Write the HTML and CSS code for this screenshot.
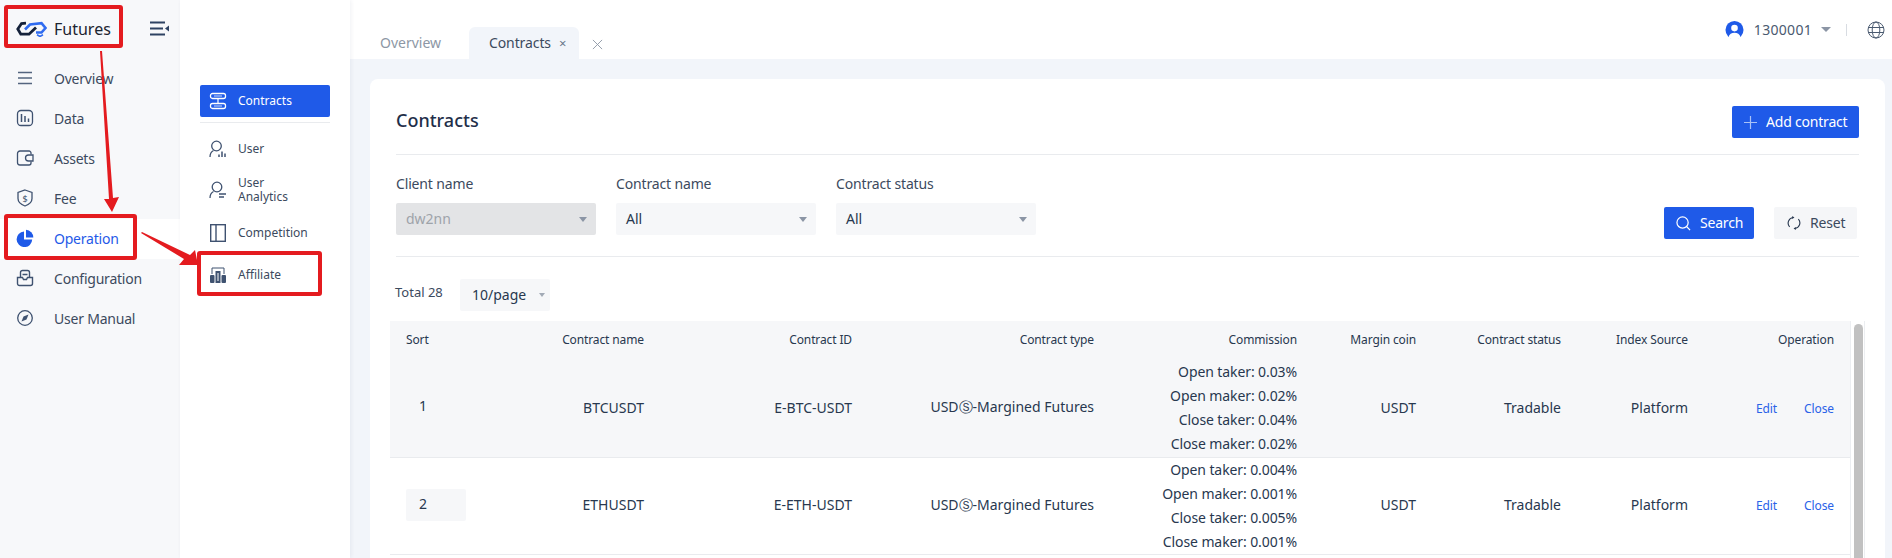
FILE: index.html
```html
<!DOCTYPE html>
<html lang="en">
<head>
<meta charset="utf-8">
<title>Futures - Contracts</title>
<link rel="stylesheet" href="styles.css">
</head>
<body>
<div class="app">
  <aside class="side">
    <div class="brand">
      <svg class="logo" viewBox="0 0 31 16" width="31" height="16"><path d="M10 2.200L5.500 2.500 1.800 8 4.800 13.200H13L20 6.500" fill="none" stroke="#14213a" stroke-width="2.800"/><path d="M9 8.500L14 3.500 25.500 2.200 29.500 7 25.500 11.500H20" fill="none" stroke="#2f6bf0" stroke-width="2.600"/><path d="M21 13.800l3 1.700 3-1.700" fill="none" stroke="#2f6bf0" stroke-width="1.600"/></svg>
      <span class="brand-name">Futures</span>
      <svg class="fold" viewBox="0 0 19 15" width="19" height="15"><path d="M0 1.500h15M0 7.500h13M0 13.500h15" stroke="#2e4262" stroke-width="2" fill="none"/><path d="M19 4.500v6l-4-3z" fill="#2e4262"/></svg>
    </div>
    <nav>
      <a class="nav-item"><svg viewBox="0 0 18 18" width="18" height="18"><path d="M2 3.500h14M2 9h14M2 14.500h14" stroke="#54657f" stroke-width="1.500" fill="none"/></svg>Overview</a>
      <a class="nav-item"><svg viewBox="0 0 18 18" width="18" height="18"><rect x="1.500" y="1.500" width="15" height="15" rx="3.500" fill="none" stroke="#3f5270" stroke-width="1.300"/><path d="M5.500 5v8M9 7v6M12.500 9.500v3.500" stroke="#3f5270" stroke-width="1.500"/></svg>Data</a>
      <a class="nav-item"><svg viewBox="0 0 18 18" width="18" height="18"><path d="M15 5.500V4a2 2 0 0 0-2-2H4a2.500 2.500 0 0 0-2.500 2.500v9A2.500 2.500 0 0 0 4 16h9a2 2 0 0 0 2-2v-1.500" fill="none" stroke="#3f5270" stroke-width="1.300"/><path d="M17 6h-4.500a3 3 0 0 0 0 6H17z" fill="#f7f8fa" stroke="#3f5270" stroke-width="1.300"/></svg>Assets</a>
      <a class="nav-item"><svg viewBox="0 0 18 18" width="18" height="18"><path d="M9 1l7 2.500v6c0 3.500-3 6-7 7.500-4-1.500-7-4-7-7.500v-6z" fill="none" stroke="#3f5270" stroke-width="1.300"/><text class="fee-sign" x="9" y="12.500">$</text></svg>Fee</a>
      <a class="nav-item active"><svg viewBox="0 0 18 18" width="18" height="18"><path d="M8 2.500A7.800 7.800 0 1 0 16.200 10.500H8z" fill="#1f5ae8"/><path d="M10 .8a7.500 7.500 0 0 1 7.300 7.700H10z" fill="#1f5ae8"/></svg>Operation</a>
      <a class="nav-item"><svg viewBox="0 0 18 18" width="18" height="18"><path d="M4.500 8V3.500a2 2 0 0 1 2-2h5a2 2 0 0 1 2 2V8M6.500 5.500h5" fill="none" stroke="#3f5270" stroke-width="1.400"/><path d="M1.500 8.500h5l1 2h3l1-2h5v6a2 2 0 0 1-2 2h-11a2 2 0 0 1-2-2z" fill="none" stroke="#3f5270" stroke-width="1.400"/></svg>Configuration</a>
      <a class="nav-item"><svg viewBox="0 0 18 18" width="18" height="18"><circle cx="9" cy="9" r="7.300" fill="none" stroke="#3f5270" stroke-width="1.300"/><path d="M12.500 5.500L10.500 10.500 5.500 12.500 7.500 7.500z" fill="#3f5270"/></svg>User Manual</a>
    </nav>
  </aside>

  <aside class="sub">
    <a class="sub-item current"><svg viewBox="0 0 18 18" width="18" height="18"><rect x="1.500" y="1.500" width="15" height="5" rx="2" fill="none" stroke="#fff" stroke-width="1.300"/><rect x="1.500" y="11.500" width="15" height="5" rx="2" fill="none" stroke="#fff" stroke-width="1.300"/><path d="M5 4h8M5 14h8" stroke="#cdddfb" stroke-width="1.200"/><path d="M9 6.500v5" stroke="#fff" stroke-width="1.200"/></svg>Contracts</a>
    <div class="sub-rule"></div>
    <a class="sub-item"><svg viewBox="0 0 18 18" width="18" height="18"><circle cx="7.500" cy="6" r="4.800" fill="none" stroke="#3f5270" stroke-width="1.300"/><path d="M1 17c0-3.500 1.500-5.500 3.500-6.500" fill="none" stroke="#3f5270" stroke-width="1.300"/><path d="M10 17v-2.500M13 17v-5.500M16 17v-3.500" fill="none" stroke="#3f5270" stroke-width="1.500"/></svg>User</a>
    <a class="sub-item double"><svg viewBox="0 0 18 18" width="18" height="18"><circle cx="8" cy="6" r="4.800" fill="none" stroke="#3f5270" stroke-width="1.300"/><path d="M1 17c0-3.500 1.500-5.500 3.500-6.500M10 13h7M10 16h5" fill="none" stroke="#3f5270" stroke-width="1.300"/></svg><span>User<br>Analytics</span></a>
    <a class="sub-item comp"><svg viewBox="0 0 18 18" width="18" height="18"><rect x="1.700" y=".7" width="14.600" height="16.600" fill="none" stroke="#3f5270" stroke-width="1.400"/><path d="M7 .7v16.600" stroke="#3f5270" stroke-width="1.400"/></svg>Competition</a>
    <a class="sub-item aff"><svg viewBox="0 0 18 18" width="18" height="18"><path d="M3 8V2h12v6" fill="none" stroke="#3f5270" stroke-width="1"/><rect x="1" y="9" width="4.500" height="8" rx="1" fill="#3f5270"/><rect x="6.500" y="5" width="5" height="12" fill="#3f5270"/><rect x="12.500" y="9" width="4.500" height="8" rx="1" fill="#3f5270"/><path d="M9 7v8" stroke="#fff" stroke-width="1"/></svg>Affiliate</a>
  </aside>

  <main class="main">
    <header class="top">
      <div class="tabs">
        <span class="tab muted">Overview</span>
        <span class="tab selected">Contracts<span class="tab-x">×</span></span>
        <svg class="tabs-close" viewBox="0 0 12 12" width="11" height="11"><path d="M1 1l10 10M11 1L1 11" stroke="#8d97a5" stroke-width="1" fill="none"/></svg>
      </div>
      <div class="account">
        <svg viewBox="0 0 20 20" width="19" height="20"><circle cx="10" cy="10" r="9.500" fill="#1f5ae8"/><circle cx="10" cy="8" r="3.500" fill="#fff"/><path d="M3.500 17.500c1-3 3.500-4.500 6.500-4.500s5.500 1.500 6.500 4.500c-2 1.500-4 2.500-6.500 2.500s-4.500-1-6.500-2.500z" fill="#fff"/></svg>
        <span class="acct-id">1300001</span>
        <span class="caret big"></span>
        <span class="acct-rule"></span>
        <svg viewBox="0 0 18 18" width="18" height="18"><circle cx="9" cy="9" r="8" fill="none" stroke="#4a5a70" stroke-width="1"/><ellipse cx="9" cy="9" rx="3.800" ry="8" fill="none" stroke="#4a5a70" stroke-width="1"/><path d="M1.500 6.500h15M1.500 11.500h15" stroke="#4a5a70" stroke-width="1"/></svg>
      </div>
    </header>

    <div class="body">
      <section class="card">
        <div class="card-head">
          <h1>Contracts</h1>
          <button class="btn primary add"><svg viewBox="0 0 14 14" width="13" height="13"><path d="M7 0v14M0 7h14" stroke="#a9c2f7" stroke-width="1.300"/></svg><span>Add contract</span></button>
        </div>
        <div class="filters">
          <label class="field"><span class="field-label">Client name</span><span class="select disabled"><span>dw2nn</span><i class="caret"></i></span></label>
          <label class="field"><span class="field-label">Contract name</span><span class="select"><span>All</span><i class="caret"></i></span></label>
          <label class="field"><span class="field-label">Contract status</span><span class="select"><span>All</span><i class="caret"></i></span></label>
          <div class="filter-actions">
            <button class="btn primary search"><svg viewBox="0 0 16 16" width="15" height="15"><circle cx="7" cy="7" r="6" fill="none" stroke="#fff" stroke-width="1.300"/><path d="M11.500 11.500L15 15" stroke="#fff" stroke-width="1.300"/></svg><span>Search</span></button>
            <button class="btn reset"><svg viewBox="0 0 16 16" width="14" height="14"><path d="M3 12.500A6.500 6.500 0 0 1 7 1.700M13 3.500a6.500 6.500 0 0 1-4 10.800" fill="none" stroke="#28384f" stroke-width="1.300"/><path d="M6 0l2.500 1.800L6 3.500M10 12.500l-2.500 1.800 2.500 1.700" fill="#28384f"/></svg><span>Reset</span></button>
          </div>
        </div>
        <div class="pager">
          <span class="total">Total 28</span>
          <span class="select page"><span>10/page</span><i class="caret small"></i></span>
        </div>
        <div class="table-wrap">
          <table class="grid">
            <colgroup>
              <col class="c-sort"><col class="c-name"><col class="c-id"><col class="c-type"><col class="c-comm"><col class="c-coin"><col class="c-status"><col class="c-index"><col class="c-op">
            </colgroup>
            <thead>
              <tr><th class="left">Sort</th><th>Contract name</th><th>Contract ID</th><th>Contract type</th><th>Commission</th><th>Margin coin</th><th>Contract status</th><th>Index Source</th><th>Operation</th></tr>
            </thead>
            <tbody>
              <tr class="hover">
                <td class="left"><span class="sort-box">1</span></td><td>BTCUSDT</td><td>E-BTC-USDT</td><td>USDⓈ-Margined Futures</td>
                <td class="comm">Open taker: 0.03%<br>Open maker: 0.02%<br>Close taker: 0.04%<br>Close maker: 0.02%</td>
                <td>USDT</td><td>Tradable</td><td>Platform</td><td class="ops"><a>Edit</a><a>Close</a></td>
              </tr>
              <tr>
                <td class="left"><span class="sort-box">2</span></td><td>ETHUSDT</td><td>E-ETH-USDT</td><td>USDⓈ-Margined Futures</td>
                <td class="comm">Open taker: 0.004%<br>Open maker: 0.001%<br>Close taker: 0.005%<br>Close maker: 0.001%</td>
                <td>USDT</td><td>Tradable</td><td>Platform</td><td class="ops"><a>Edit</a><a>Close</a></td>
              </tr>
            </tbody>
          </table>
          <div class="scroll"><div class="thumb"></div></div>
        </div>
      </section>
    </div>
  </main>

  <svg class="marks" viewBox="0 0 1892 558" width="1892" height="558">
    <rect x="6" y="7" width="115" height="39" rx="1" class="mark-box"/>
    <rect x="6" y="216" width="129" height="42" rx="1" class="mark-box"/>
    <rect x="199" y="253" width="121" height="41" rx="1" class="mark-box"/>
    <path d="M100 51L102 51 113 198 119 197 112 212 104 199 109 199z" class="mark-fill"/>
    <path d="M141 233L142 232 190 255 195 250 198 265 179 265 184 259z" class="mark-fill"/>
  </svg>
</div>
</body>
</html>
```

FILE: styles.css
```css
* { box-sizing: border-box; }
html, body { margin: 0; height: 100%; }
body { font-family: "Noto Sans", "Liberation Sans", sans-serif; color: #28384f; font-size: 14px; overflow: hidden; background: #fff; }
.app { position: relative; display: flex; width: 1892px; height: 558px; overflow: hidden; }

.side { width: 180px; flex: none; background: #f7f8fa; }
.brand { display: flex; align-items: center; height: 59px; padding-left: 16px; padding-bottom: 2px; }
.logo { margin-right: 7px; flex: none; }
.brand-name { font-size: 16px; color: #1c2430; width: 96px; }
.fold { flex: none; }
.nav-item { display: flex; align-items: center; gap: 20px; height: 40px; padding: 0 0 2px 16px; color: #3c4a5e; letter-spacing: -.22px; }
.nav-item.active { background: #fff; color: #1f5ae8; }
.fee-sign { font-size: 9px; fill: #3f5270; text-anchor: middle; font-family: "Noto Sans", sans-serif; }

.sub { width: 170px; flex: none; padding: 85px 20px 0; background: #fff; box-shadow: 1px 0 4px rgba(40, 60, 100, .07); position: relative; }
.sub-item { display: flex; align-items: center; gap: 11px; height: 20px; font-size: 12px; color: #3c4a5e; padding-left: 9px; line-height: 14px; }
.sub-item.current { height: 32px; background: #1f5ae8; color: #fff; border-radius: 2px; }
.sub-rule { height: 1px; background: #e9ebee; margin: 5px 0 16px; }
.sub-item svg { flex: none; }
.sub-item.double { height: 28px; margin-top: 17px; }
.sub-item.comp { margin-top: 19px; }
.sub-item.aff { margin-top: 22px; }

.main { flex: 1; display: flex; flex-direction: column; min-width: 0; }
.top { height: 59px; flex: none; display: flex; justify-content: space-between; background: #fff; padding-right: 7px; }
.tabs { display: flex; align-items: flex-end; padding-left: 30px; }
.tab { height: 32px; line-height: 31px; }
.tab.muted { color: #8d97a5; width: 89px; }
.tab.selected { width: 110px; padding-left: 20px; background: #f2f5fa; border-radius: 6px 6px 0 0; color: #3c4a5e; letter-spacing: -.1px; }
.tab-x { margin-left: 8px; font-size: 13px; color: #6a7789; }
.tabs-close { margin: 0 0 9px 13px; }
.account { display: flex; align-items: center; height: 59px; }
.acct-id { margin-left: 10px; color: #4a5a70; letter-spacing: .3px; }
.caret { display: block; width: 0; height: 0; border-left: 4px solid transparent; border-right: 4px solid transparent; border-top: 5px solid #8b95a5; }
.caret.big { margin-left: 9px; border-left-width: 5px; border-right-width: 5px; border-top-width: 5px; }
.caret.small { border-left-width: 3px; border-right-width: 3px; border-top-width: 4px; border-top-color: #a2aab6; }
.acct-rule { width: 1px; height: 12px; background: #d8dce2; margin: 0 20px 0 15px; }

.body { flex: 1; background: #f2f5fa; padding: 20px 7px 0 20px; min-height: 0; }
.card { background: #fff; border-radius: 8px 8px 0 0; height: 100%; padding: 27px 26px 0; }
.card-head { display: flex; justify-content: space-between; align-items: flex-start; height: 49px; border-bottom: 1px solid #e9ebee; }
h1 { margin: 0; font-size: 18px; font-weight: 500; line-height: 28px; color: #1f2f4a; }
.btn { display: inline-flex; align-items: center; height: 32px; border: 0; border-radius: 2px; font: inherit; padding: 0; cursor: pointer; letter-spacing: -.2px; }
.btn span { position: relative; top: -1px; }
.btn.primary { background: #1f5ae8; color: #fff; }
.add { width: 127px; padding-left: 12px; gap: 9px; }
.search { width: 90px; padding-left: 12px; gap: 9px; }
.reset { width: 83px; padding-left: 13px; gap: 9px; background: #f5f6f8; color: #3c4a5e; margin: 0 2px 0 20px; }

.filters { display: flex; align-items: flex-end; gap: 20px; height: 102px; padding: 20px 0 21px; border-bottom: 1px solid #e9ebee; }
.field { display: flex; flex-direction: column; width: 200px; }
.field-label { line-height: 18px; margin-bottom: 10px; color: #3c4a5e; letter-spacing: -.15px; }
.select { display: flex; align-items: center; justify-content: space-between; height: 32px; background: #f6f7f9; border-radius: 2px; padding: 0 9px 0 10px; color: #28384f; }
.select span { position: relative; top: -1px; }
.select.disabled { background: #e3e4e6; color: #9ea3aa; }
.filter-actions { margin-left: auto; display: flex; margin-bottom: -4px; }

.pager { display: flex; align-items: flex-start; margin: 22px 0 10px -1px; height: 32px; }
.total { width: 65px; line-height: 26px; font-size: 13px; color: #3c4a5e; }
.select.page { width: 90px; padding: 0 5px 0 12px; }

.table-wrap { display: flex; align-items: flex-start; margin: 0 -6px; height: 237px; }
.grid { width: 1460px; border-collapse: collapse; table-layout: fixed; flex: none; }
.c-sort { width: 100px; } .c-name { width: 170px; } .c-id { width: 208px; } .c-type { width: 242px; }
.c-comm { width: 203px; } .c-coin { width: 119px; } .c-status { width: 145px; } .c-index { width: 127px; } .c-op { width: 146px; }
thead tr { background: #f6f7f9; }
th { height: 39px; font-size: 12px; font-weight: 400; text-align: right; padding: 0 16px 2px; color: #28384f; letter-spacing: -.12px; }
td { height: 97px; text-align: right; padding: 0 16px 2px; border-bottom: 1px solid #e9ebee; color: #28384f; white-space: nowrap; }
tr.hover { background: #f6f7f9; }
.left { text-align: left; }
.comm { line-height: 24px; padding-bottom: 0; letter-spacing: -.1px; }
.sort-box { display: block; width: 60px; height: 32px; line-height: 30px; background: #f6f7f9; padding-left: 13px; border-radius: 2px; }
.ops { font-size: 12px; padding-bottom: 0; letter-spacing: -.1px; }
.ops a { color: #2a62e8; margin-left: 27px; }
.scroll { width: 15px; height: 237px; flex: none; padding: 3px 0 0 3px; border-left: 1px solid #eceef1; border-right: 1px solid #eceef1; overflow: hidden; }
.thumb { width: 9px; height: 300px; background: #c1c1c1; border-radius: 5px; }

.marks { position: absolute; left: 0; top: 0; pointer-events: none; }
.mark-box { fill: none; stroke: #e41b1f; stroke-width: 4; }
.mark-fill { fill: #e41b1f; }
```
